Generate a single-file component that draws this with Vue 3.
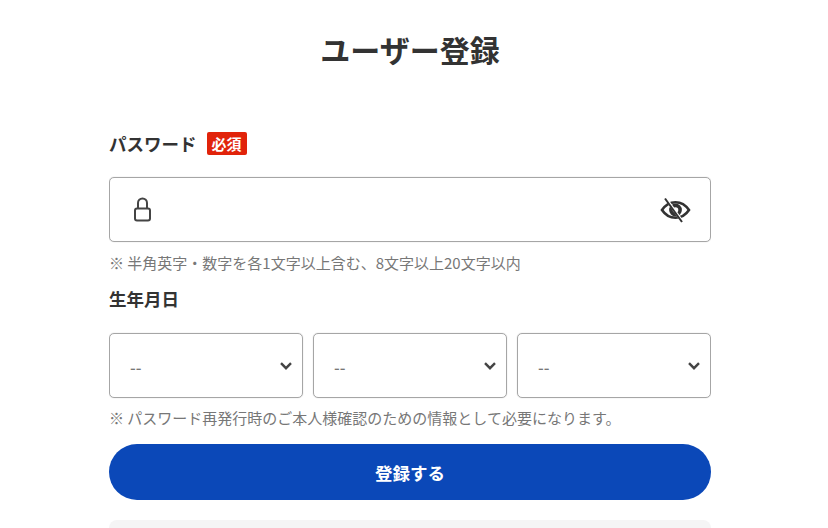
<script setup>
const selects = [1, 2, 3]
</script>

<template>
  <main class="page">
    <h1 class="title">ユーザー登録</h1>
    <div class="label-row">
      <span class="label">パスワード</span>
      <span class="badge">必須</span>
    </div>
    <div class="field">
      <svg class="lock" width="24" height="26" viewBox="0 0 24 26" fill="none" stroke="#444" stroke-width="2">
        <rect x="4" y="11.500" width="15" height="12" rx="2" />
        <path d="M7 11.500V6a4.500 4.500 0 0 1 9 0V11.500" />
      </svg>
      <svg class="eye" width="32" height="26" viewBox="0 0 32 26" fill="none" stroke="#333">
        <path d="M3 13C6.500 7.800 11 5.200 16.500 5.200S26.500 7.800 30 13C26.500 18.200 22 20.800 16.500 20.800S6.500 18.200 3 13Z" stroke-width="2.600" />
        <circle cx="16.500" cy="13" r="4.600" stroke-width="3.600" />
        <path d="M7.400 2 24.400 26" stroke="#fff" stroke-width="2.800" />
        <path d="M6 1.500 23 25" stroke-width="2" />
      </svg>
    </div>
    <p class="note first">※ 半角英字・数字を各1文字以上含む、8文字以上20文字以内</p>
    <div class="label date-label">生年月日</div>
    <div class="selects">
      <div v-for="s in selects" :key="s" class="select">
        <span class="dash">--</span>
        <svg width="14" height="10" viewBox="0 0 14 10" fill="none" stroke="#444" stroke-width="2.400">
          <path d="M2 2.200 7 7.200 12 2.200" />
        </svg>
      </div>
    </div>
    <p class="note second">※ パスワード再発行時のご本人様確認のための情報として必要になります。</p>
    <button class="submit" type="button">登録する</button>
    <div class="next"></div>
  </main>
</template>

<style scoped>
.page {
  width: 602px;
  height: 528px;
  margin-left: 109px;
  overflow: hidden;
  font-family: "Noto Sans CJK JP", "Noto Sans", sans-serif;
  color: #333;
}
.title {
  margin: 0;
  padding-top: 27px;
  height: 104px;
  box-sizing: border-box;
  font-size: 30px;
  line-height: 44px;
  font-weight: 700;
  text-align: center;
}
.label-row {
  display: flex;
  align-items: center;
  gap: 11px;
  height: 24px;
  margin-top: 28px;
}
.label {
  font-size: 17.500px;
  line-height: 24px;
  font-weight: 700;
}
.badge {
  width: 40px;
  height: 23px;
  margin-top: -1px;
  margin-left: -1px;
  border-radius: 2px;
  background: #e1230a;
  color: #fff;
  font-size: 15px;
  line-height: 23px;
  font-weight: 700;
  text-align: center;
}
.field {
  display: flex;
  align-items: center;
  justify-content: space-between;
  box-sizing: border-box;
  height: 65px;
  margin-top: 21px;
  padding: 0 19px 0 21px;
  border: 1px solid #a6a6a6;
  border-radius: 5px;
  box-shadow: 0 0 1px #b5b5b5;
}
.note {
  margin: 0;
  font-size: 15px;
  line-height: 20px;
  color: #777;
}
.note.first { margin-top: 11px; }
.date-label { margin-top: 14px; height: 24px; }
.selects {
  display: grid;
  grid-template-columns: repeat(3, 1fr);
  gap: 10px;
  margin-top: 22px;
}
.select {
  display: flex;
  align-items: center;
  justify-content: space-between;
  box-sizing: border-box;
  height: 65px;
  padding: 0 9px 0 20px;
  border: 1px solid #a6a6a6;
  border-radius: 5px;
  box-shadow: 0 0 1px #b5b5b5;
}
.dash {
  font-size: 16px;
  font-weight: 500;
  color: #777;
  padding-top: 3px;
}
.note.second { margin-top: 10px; }
.submit {
  display: block;
  width: 100%;
  height: 56px;
  margin-top: 16px;
  border: 0;
  border-radius: 28px;
  background: #0b48b8;
  color: #fff;
  font-family: inherit;
  font-size: 17.500px;
  font-weight: 700;
}
.next {
  height: 40px;
  margin-top: 20px;
  border-radius: 8px;
  background: #f5f5f5;
}
</style>
